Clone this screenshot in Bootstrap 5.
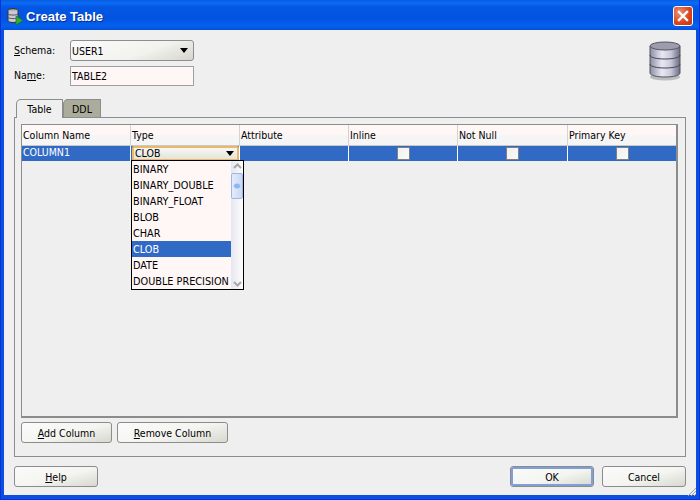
<!DOCTYPE html>
<html lang="en">
<head>
<meta charset="utf-8">
<title>Create Table</title>
<link href="https://cdn.jsdelivr.net/npm/bootstrap@5.3.0/dist/css/bootstrap.min.css" rel="stylesheet">
<style>
html,body{margin:0;height:500px;overflow:hidden;background:#0055e5}
body{font-family:"DejaVu Sans Condensed","DejaVu Sans",sans-serif;font-stretch:condensed;font-size:10.5px;color:#000;line-height:14px}
.xp-win{width:700px;height:500px;position:relative;background:#0a4fe0;border:solid #0831d9;border-width:0 1px 1px 1px}
.xp-title{height:30px;padding:2px 6px 0 5px;background:linear-gradient(180deg,#0a5ae0 0,#0a6cf5 3px,#0457e3 7px,#0254e0 18px,#0560ee 26px,#0450d8 30px);color:#fff;font-family:"Liberation Sans",Arial,sans-serif;font-size:13px;font-weight:700;text-shadow:1px 1px 0 #0a2a90}
.xp-title-text{margin-left:-2px;padding-top:2px}
.xp-close{width:20px;height:20px;border:1px solid #fff;border-radius:3px;background:radial-gradient(circle at 30% 30%,#ef8d70,#d9431e 60%,#c23512);padding:0}
.xp-body{height:465px;margin:0 3px;background:#efefef;padding:10px 10px 8px 10px}
.xp-field{height:21px;width:124px;border:1px solid #8e8e8e;border-radius:3px;background:linear-gradient(160deg,#fbfbfb 0,#f2f2ee 60%,#d6d6ce 100%);padding:0 1px}
.xp-input{height:20px;width:124px;border:1px solid #a0a0a0;background:#fff6f6;padding:0 1px;display:flex;align-items:center}
.xp-row2{margin-top:5px}
.xp-lab{width:56px;margin-bottom:2px}
.xp-arrow{width:0;height:0;border-style:solid;border-width:5px 4.5px 0;border-color:#000 transparent transparent}
.xp-tabs{height:18px;margin-left:2px;margin-top:13px;border:0}
.xp-tab{height:19px;border:1px solid #8c8c8c;border-bottom:0;border-radius:5px 0 0 0;padding:2px 0 0;text-align:center;color:#000}
.xp-tab.on{width:47px;background:#efefef;position:relative;z-index:1}
.xp-tab.off{width:38px;background:#acac9c;height:18px;margin-top:0}
.xp-panel{height:340px;border:1px solid #8c8c8c;padding:6px 7px 12px 6px;position:relative}
.xp-grid{height:294px;border:2px solid #8c8c8c;border-width:1px 2px 2px 1px;background:#efefef;position:relative}
.xp-table{width:654px;table-layout:fixed;border-collapse:separate;border-spacing:0;margin:0}
.xp-table th{height:21px;padding:0 1px;font-weight:400;background:linear-gradient(180deg,#fff6f6 50%,#f5f5f5 55%);border-right:1px solid #d4d4d4;border-bottom:1px solid #c8c8c8}
.xp-table td{height:15px;padding:0 1px;background:#316ac5;color:#fff;border-right:1px solid #fff;line-height:13px}
.xp-table td.xp-name{vertical-align:top}
.xp-table th:last-child,.xp-table td:last-child{border-right:0}
.xp-check{display:block;width:13px;height:13px;margin:0 auto;border:1px solid #808080;background:linear-gradient(135deg,#f0f0ee,#fafafa)}
.xp-combo{height:15px;width:107px;border:2px solid #eab868;border-radius:2px;background:linear-gradient(180deg,#f6f6f4,#e4e4dc);color:#000;padding:0 3px 0 1px;line-height:11px}
.xp-drop{position:absolute;left:109px;top:35px;width:113px;height:130px;border:1px solid #000;background:#fff6f6;z-index:2}
.xp-item{height:16px;line-height:17px;padding-left:1px;white-space:nowrap;width:99px;overflow:hidden;font-size:10.8px}
.xp-item.sel{background:#316ac5;color:#fff}
.xp-scroll{width:13px;background:linear-gradient(90deg,#e6e6f0,#fdfdfd)}
.xp-thumb{display:block;height:26px;margin-top:1px;margin-bottom:auto;width:12px;border:1px solid #9db8e8;border-radius:2px;background:radial-gradient(ellipse 4px 3px at 50% 50%,#8fb4f4 60%,transparent 100%),linear-gradient(90deg,#e4ecfa,#c8d8f4)}
.xp-btn{--bs-btn-padding-x:0;--bs-btn-padding-y:0;--bs-btn-font-size:10.5px;--bs-btn-line-height:14px;--bs-btn-border-radius:3px;height:21px;border:1px solid #8c8c8c;background:linear-gradient(165deg,#fbfbfb 0,#f4f4f0 55%,#d8d8d0 100%);color:#000;font-family:inherit}
.xp-btn:hover{border-color:#8c8c8c;background:linear-gradient(165deg,#fbfbfb 0,#f4f4f0 55%,#d8d8d0 100%);color:#000}
.xp-def{box-shadow:inset 0 0 0 2px #7e9fd8}
.xp-w-add{width:91px;margin-right:5px}.xp-w-rem{width:111px}.xp-w-foot{width:84px}
.xp-grip{position:absolute;right:3px;bottom:3px}
</style>
</head>
<body>
<div class="xp-win">
  <div class="xp-title d-flex align-items-center">
    <svg width="18" height="18" viewBox="0 0 18 18" class="me-1 flex-shrink-0">
      <ellipse cx="7" cy="3.5" rx="5" ry="2" fill="#9a9aa8" stroke="#333"/>
      <path d="M2 3.5v10c0 1.2 2.2 2 5 2s5-.8 5-2v-10" fill="#c8c8d8" stroke="#333"/>
      <path d="M2 7c1 1.4 9 1.4 10 0M2 10.500c1 1.400 9 1.400 10 0" fill="none" stroke="#555"/>
      <path d="M10 9l7 4.500-7 4.500z" fill="#2fb02f" stroke="#0e6e0e" stroke-width=".6"/>
    </svg>
    <span class="flex-grow-1 xp-title-text">Create Table</span>
    <button type="button" class="xp-close d-flex align-items-center justify-content-center" aria-label="Close">
      <svg width="12" height="12" viewBox="0 0 12 12"><path d="M2 2l8 8M10 2l-8 8" stroke="#fff" stroke-width="2.400" stroke-linecap="square"/></svg>
    </button>
  </div>
  <div class="xp-body d-flex flex-column">
    <div class="d-flex justify-content-between">
      <div>
        <div class="d-flex align-items-center">
          <span class="xp-lab"><u>S</u>chema:</span>
          <div class="xp-field d-flex align-items-center justify-content-between"><span>USER1</span><span class="xp-arrow me-1"></span></div>
        </div>
        <div class="d-flex align-items-center xp-row2">
          <span class="xp-lab">Na<u>m</u>e:</span>
          <div class="xp-input">TABLE2</div>
        </div>
      </div>
      <svg width="34" height="42" viewBox="0 0 34 42" class="me-1 mt-0">
        <defs><linearGradient id="dbg" x1="0" x2="1" y1="0" y2="0"><stop offset="0" stop-color="#8e8ea6"/><stop offset=".4" stop-color="#e8e8f4"/><stop offset=".7" stop-color="#c8c8da"/><stop offset="1" stop-color="#6a6a82"/></linearGradient></defs>
        <ellipse cx="17" cy="37" rx="15" ry="3.500" fill="#bdbdbd"/>
        <path d="M2 6v27c0 2.500 6.500 4 15 4s15-1.500 15-4V6z" fill="url(#dbg)" stroke="#55555f"/>
        <ellipse cx="17" cy="6" rx="15" ry="4" fill="#9c9cae" stroke="#55555f"/>
        <path d="M2 15c0 2.500 6.500 4 15 4s15-1.500 15-4M2 24c0 2.500 6.500 4 15 4s15-1.500 15-4" fill="none" stroke="#45454f"/>
      </svg>
    </div>
    <div class="xp-tabs d-flex">
      <div class="xp-tab on">Table</div>
      <div class="xp-tab off">DDL</div>
    </div>
    <div class="xp-panel d-flex flex-column">
      <div class="xp-grid">
        <table class="xp-table">
          <colgroup><col style="width:109px"><col style="width:109px"><col style="width:109px"><col style="width:109px"><col style="width:110px"><col style="width:108px"></colgroup>
          <thead><tr><th>Column Name</th><th>Type</th><th>Attribute</th><th>Inline</th><th>Not Null</th><th>Primary Key</th></tr></thead>
          <tbody><tr>
            <td class="xp-name">COLUMN1</td>
            <td><div class="xp-combo d-flex align-items-center justify-content-between"><span>CLOB</span><span class="xp-arrow"></span></div></td>
            <td></td>
            <td><span class="xp-check"></span></td>
            <td><span class="xp-check"></span></td>
            <td><span class="xp-check"></span></td>
          </tr></tbody>
        </table>
        <div class="xp-drop d-flex">
          <div>
            <div class="xp-item">BINARY</div>
            <div class="xp-item">BINARY_DOUBLE</div>
            <div class="xp-item">BINARY_FLOAT</div>
            <div class="xp-item">BLOB</div>
            <div class="xp-item">CHAR</div>
            <div class="xp-item sel">CLOB</div>
            <div class="xp-item">DATE</div>
            <div class="xp-item">DOUBLE PRECISION</div>
          </div>
          <div class="xp-scroll d-flex flex-column align-items-center">
            <svg width="11" height="11" viewBox="0 0 11 11" class="flex-shrink-0"><path d="M2 7l3.500-3.500L9 7" fill="none" stroke="#a8a8a8" stroke-width="2"/></svg>
            <span class="xp-thumb"></span>
            <svg width="11" height="11" viewBox="0 0 11 11" class="flex-shrink-0"><path d="M2 4l3.500 3.500L9 4" fill="none" stroke="#a8a8a8" stroke-width="2"/></svg>
          </div>
        </div>
      </div>
      <div class="d-flex mt-1 pt-0">
        <button type="button" class="btn xp-btn xp-w-add"><u>A</u>dd Column</button>
        <button type="button" class="btn xp-btn xp-w-rem"><u>R</u>emove Column</button>
      </div>
    </div>
    <div class="d-flex mt-auto">
      <button type="button" class="btn xp-btn xp-w-foot"><u>H</u>elp</button>
      <button type="button" class="btn xp-btn xp-w-foot xp-def ms-auto">OK</button>
      <button type="button" class="btn xp-btn xp-w-foot ms-2">Cancel</button>
    </div>
  </div>
  <svg class="xp-grip" width="9" height="9" viewBox="0 0 9 9"><path d="M1 9l8-8M4 9l5-5M7 9l2-2" stroke="#a0a0a0" fill="none"/></svg>
</div>
<script src="https://cdn.jsdelivr.net/npm/bootstrap@5.3.0/dist/js/bootstrap.bundle.min.js"></script>
</body>
</html>
